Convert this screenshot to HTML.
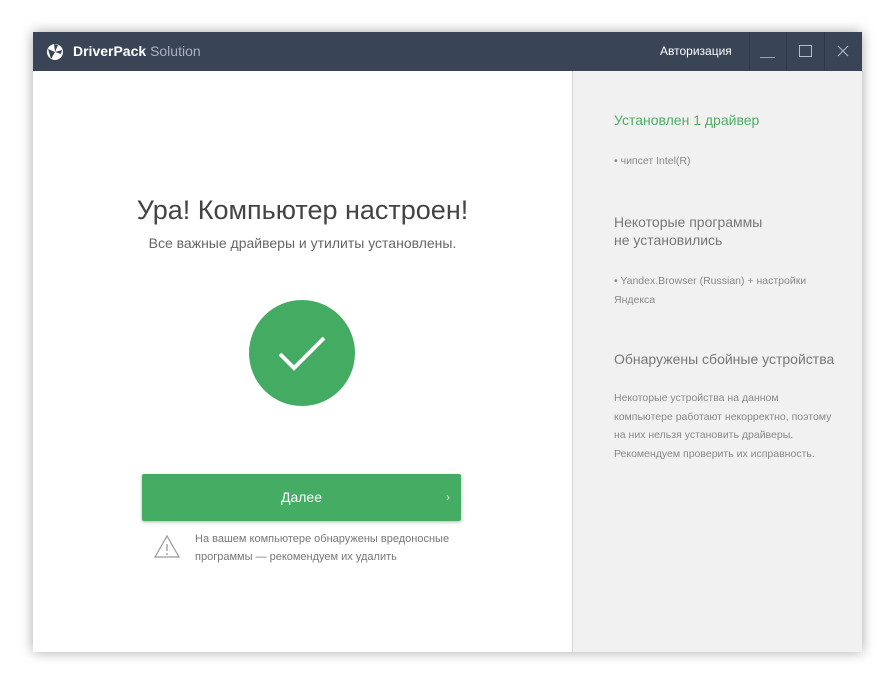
<!DOCTYPE html>
<html><head><meta charset="utf-8"><style>
*{margin:0;padding:0;box-sizing:border-box}
body{width:895px;height:684px;background:#fff;font-family:"Liberation Sans",sans-serif;position:relative;overflow:hidden}
.win{position:absolute;left:33px;top:32px;width:829px;height:620px;background:#fff;box-shadow:0 0 12px rgba(0,0,0,.35)}
.tb{position:absolute;left:0;top:0;width:829px;height:39px;background:#394457}
.logo{position:absolute;left:13px;top:11px}
.brand{position:absolute;left:40px;top:11px;color:#fff;font-size:14px}
.brand b{font-weight:bold}.brand span{color:#aab2bf}
.auth{position:absolute;left:627px;top:12px;color:#fff;font-size:12px}
.sep{position:absolute;top:0;width:1px;height:39px;background:#2f3848}
.left{position:absolute;left:0;top:39px;width:539px;height:581px}
.right{position:absolute;left:539px;top:39px;width:290px;height:581px;background:#f1f1f1;border-left:1px solid #d6d6d6}
h1{position:absolute;left:0;width:539px;top:124px;text-align:center;font-weight:normal;font-size:27px;color:#444}
.sub{position:absolute;left:0;width:539px;top:164px;text-align:center;font-size:14px;color:#666}
.circle{position:absolute;left:216px;top:229px;width:106px;height:106px;border-radius:50%;background:#43ac62}
.btn{position:absolute;left:109px;top:403px;width:319px;height:47px;background:#45ad63;border-radius:2px;box-shadow:0 1px 3px rgba(0,0,0,.3);color:#fff;text-align:center;line-height:47px;font-size:14px}
.btn i{position:absolute;right:11px;top:0;font-style:normal;color:#cfe9d6;font-size:12px}
.warn{position:absolute;font-size:11px;color:#777;line-height:18px}
.r{position:absolute;left:41px;color:#888}
.g{color:#4cae63;font-size:14px}
.h{font-size:14px;line-height:18px;color:#777}
.s{font-size:10.5px;line-height:18.5px}
</style></head><body>
<div class="win">
 <div class="tb">
  <svg class="logo" width="18" height="18" viewBox="0 0 18 18"><circle cx="9" cy="9" r="8" fill="#fff"/><path d="M2 6 L9 9 L5 16 Z" fill="#394457"/><path d="M9 9 L16 7 L15 11 Z" fill="#394457"/><path d="M8 1 L9 9 L12 2Z" fill="#394457"/></svg>
  <div class="brand"><b>DriverPack</b> <span>Solution</span></div>
  <div class="auth">Авторизация</div>
  <div class="sep" style="left:716px"></div><div class="sep" style="left:753px"></div><div class="sep" style="left:791px"></div>
  <div style="position:absolute;left:727px;top:25px;width:15px;height:1px;background:#9aa3b1"></div>
  <div style="position:absolute;left:766px;top:13px;width:13px;height:12px;border:1px solid #b6bdc8"></div>
  <svg style="position:absolute;left:804px;top:13px" width="12" height="12"><path d="M1 1L11 11M11 1L1 11" stroke="#aab2bf" stroke-width="1.2"/></svg>
 </div>
 <div class="left">
  <h1>Ура! Компьютер настроен!</h1>
  <div class="sub">Все важные драйверы и утилиты установлены.</div>
  <div class="circle"><svg width="106" height="106"><path d="M31 54 L45 68 L75 38" stroke="#fff" stroke-width="4" fill="none"/></svg></div>
  <div class="btn">Далее<i>›</i></div>
  <svg style="position:absolute;left:120px;top:463px" width="28" height="26"><path d="M14 2 L26 23 L2 23 Z" fill="none" stroke="#999" stroke-width="1.2"/><path d="M14 10 V17 M14 19 V21" stroke="#999" stroke-width="1.3"/></svg>
  <div class="warn" style="top:459px;left:162px">На вашем компьютере обнаружены вредоносные<br>программы — рекомендуем их удалить</div>
 </div>
 <div class="right">
  <div class="r g" style="top:41px">Установлен 1 драйвер</div>
  <div class="r s" style="top:81px">• чипсет Intel(R)</div>
  <div class="r h" style="top:142px">Некоторые программы<br>не установились</div>
  <div class="r s" style="top:201px">• Yandex.Browser (Russian) + настройки<br>Яндекса</div>
  <div class="r h" style="top:279px">Обнаружены сбойные устройства</div>
  <div class="r s" style="top:318px">Некоторые устройства на данном<br>компьютере работают некорректно, поэтому<br>на них нельзя установить драйверы.<br>Рекомендуем проверить их исправность.</div>
 </div>
</div>
</body></html>
